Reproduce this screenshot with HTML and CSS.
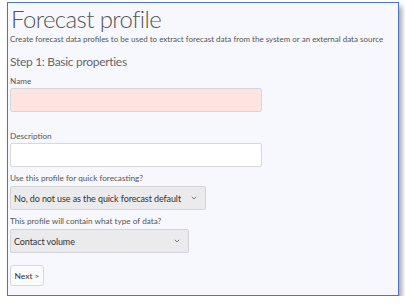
FILE: index.html
```html
<!DOCTYPE html>
<html lang="en">
<head>
    <meta charset="UTF-8">
    <title>Forecast profile</title>
    <link rel="stylesheet" href="styles.css">
</head>
<body>
    <div class="panel">
        <h1>Forecast profile</h1>
        <p class="intro">Create forecast data profiles to be used to extract forecast data from the system or an external data source</p>

        <h2>Step 1: Basic properties</h2>

        <form>
            <label for="name">Name</label>
            <input type="text" id="name" class="field field-name invalid">

            <label for="desc" class="gap">Description</label>
            <input type="text" id="desc" class="field field-name">

            <label for="quick">Use this profile for quick forecasting?</label>
            <div class="select select-quick">
                <span>No, do not use as the quick forecast default</span>
                <svg width="6" height="4" viewBox="0 0 6 4"><path d="M0.8 0.8 L3 3 L5.2 0.8" fill="none" stroke="#777" stroke-width="1"/></svg>
            </div>

            <label for="type">This profile will contain what type of data?</label>
            <div class="select select-type">
                <span>Contact volume</span>
                <svg width="6" height="4" viewBox="0 0 6 4"><path d="M0.8 0.8 L3 3 L5.2 0.8" fill="none" stroke="#777" stroke-width="1"/></svg>
            </div>

            <button type="button">Next &gt;</button>
        </form>
    </div>
</body>
</html>
```

FILE: styles.css
```css
body {
    margin: 0;
    background: #fff;
    font-family: Lato, sans-serif;
    color: #444;
}

.panel {
    margin: 2px 0 0 7px;
    width: 388px;
    height: 292px;
    border: 1px solid #4d74c6;
    background: #f7f8fd;
    box-shadow: 3px 4px 5px rgba(0, 0, 0, 0.35);
    padding: 0 0 0 2px;
    box-sizing: content-box;
}

h1 {
    font-weight: 300;
    font-size: 24px;
    letter-spacing: -0.6px;
    line-height: 28px;
    margin: 2px 0 0 1px;
    color: #555;
}

.intro {
    font-size: 8px;
    margin: 0;
    line-height: 12px;
    color: #555;
    white-space: nowrap;
}

h2 {
    font-weight: 400;
    font-size: 12px;
    letter-spacing: -0.3px;
    margin: 9px 0 0;
    line-height: 16px;
    color: #666;
}

form {
    display: flex;
    flex-direction: column;
    align-items: flex-start;
}

label {
    font-size: 8.2px;
    line-height: 11px;
    margin-top: 6px;
    color: #555;
}

label.gap {
    margin-top: 19px;
}

.field {
    box-sizing: border-box;
    height: 24px;
    border: 1px solid #d8d8dc;
    border-radius: 2px;
    background: #fff;
    margin-top: 1px;
}

.field-name {
    width: 252px;
}

.invalid {
    background: #fde4e1;
}

.select {
    box-sizing: border-box;
    height: 24px;
    margin-top: 2px;
    border: 1px solid #d4d4d8;
    border-radius: 2px;
    background: #ebebed;
    display: flex;
    align-items: center;
    justify-content: space-between;
    padding: 0 8px 0 3px;
    font-size: 9px;
    letter-spacing: -0.1px;
    color: #333;
    white-space: nowrap;
}

.select-quick {
    width: 196px;
}

.select-type {
    width: 179px;
}

button {
    margin-top: 12px;
    width: 34px;
    height: 21px;
    border: 1px solid #d8d8dc;
    border-radius: 3px;
    background: #fbfbfb;
    font-family: Lato, sans-serif;
    font-size: 8.4px;
    color: #333;
    padding: 0;
}
```
